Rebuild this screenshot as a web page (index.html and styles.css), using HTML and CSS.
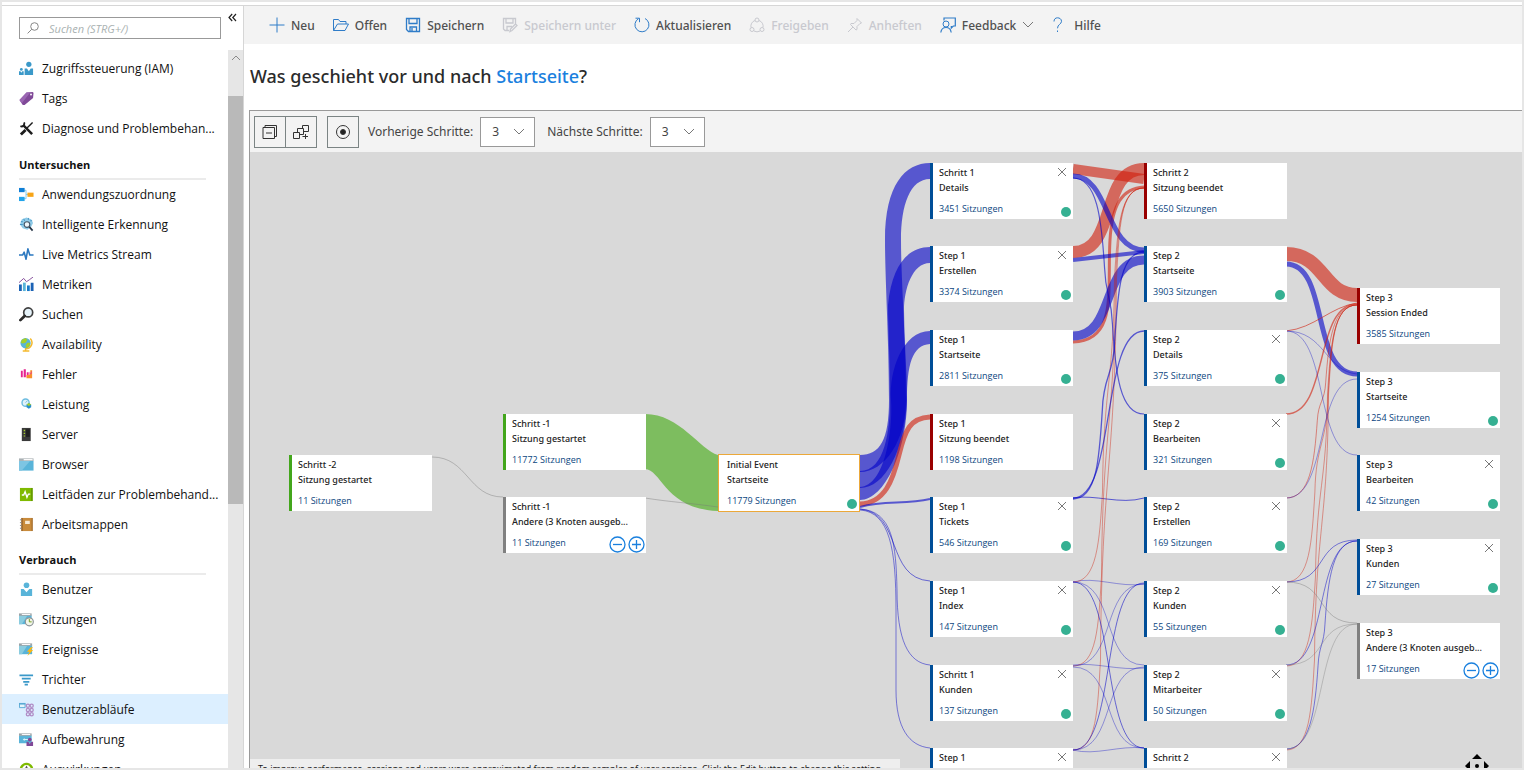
FILE: index.html
```html
<!DOCTYPE html>
<html lang="de">
<head>
<meta charset="utf-8">
<title>Benutzerabläufe</title>
<link rel="stylesheet" href="styles.css">
</head>
<body>
<div class="shell">
  <aside class="sidebar">
    <div class="side-head">
      <label class="search">
        <svg width="12" height="12" viewBox="0 0 12 12" fill="none" stroke="#888"><circle cx="7.5" cy="4.5" r="3.8"/><path d="M4.800 7.200 0.600 11.400"/></svg>
        <input type="text" placeholder="Suchen (STRG+/)" aria-label="Suchen">
      </label>
      <button class="collapse" aria-label="Menü einklappen">
        <svg width="9" height="9" viewBox="0 0 9 9" fill="none" stroke="#222" stroke-width="1.200"><path d="M4.200 1 1 4.500l3.200 3.500M8 1 4.800 4.500 8 8"/></svg>
      </button>
    </div>
    <div class="side-body">
      <nav class="menu">
        <ul>
          <li><a href="#"><svg viewBox="0 0 16 16"><g fill="#3b99c9"><circle cx="10.500" cy="3.500" r="2.800"/><path d="M6 15V8h2.500l2 3 2-3H15v7z"/><circle cx="2.500" cy="9" r="1.500"/><path d="M0 15v-4h1.500l1 1.500 1-1.500H5v4z"/></g></svg>Zugriffssteuerung (IAM)</a></li>
          <li><a href="#"><svg viewBox="0 0 16 16"><path fill="#804998" d="M.5 9.500 8 1.500 14.500 1l1 .8-.5 5.700-9 7.500-2 0z"/><path fill="#9a66b2" d="M.5 9.500 8 1.500h4L3 13z"/><circle cx="12.800" cy="3.700" r="1" fill="#fff"/></svg>Tags</a></li>
          <li><a href="#"><svg viewBox="0 0 16 16" fill="none" stroke="#1c1c1c"><path stroke-width="2.600" d="m4.500 4.500 9.500 9.500"/><path stroke-width="2" d="M5.500 1.500c1 3-1.500 5-4 4"/><path stroke-width="1.500" d="M14.500 1.500 8 8"/><path stroke-width="3" d="M7 9.500 2 14.500"/></svg>Diagnose und Problembehan...</a></li>
        </ul>
        <h2>Untersuchen</h2>
        <ul>
          <li><a href="#"><svg viewBox="0 0 16 16"><path d="M5 3.500h2.500v9H5M7.500 8H10" fill="none" stroke="#7cc6ea"/><path fill="#0f7fd6" d="M0 1h6v4.500H0z"/><path fill="#22a4ea" d="M0 10.500h6V15H0z"/><path fill="#f7a416" d="M9 6h6.500v4.500H9z"/></svg>Anwendungszuordnung</a></li>
          <li><a href="#"><svg viewBox="0 0 16 16"><path fill="#8fcbe8" d="M3 2.500 8 .5l5 2 2 4-2 4-4 3-5-1.500L1 8z"/><path d="M2 5h2M1 8h3M5 2l1 2M10 1v2M12 4h2" stroke="#3f8fc0" fill="none"/><circle cx="8.500" cy="8" r="3" fill="#eef7fb" stroke="#456" stroke-width="1.200"/><path d="m11 10.500 3.500 4" stroke="#234" stroke-width="1.800"/></svg>Intelligente Erkennung</a></li>
          <li><a href="#"><svg viewBox="0 0 16 16" fill="none" stroke="#2b78c0" stroke-width="1.700" stroke-linejoin="round"><path d="M0 8.500h4l1.500-3 2 7.500L9.500 2l2 6.500H15.500"/></svg>Live Metrics Stream</a></li>
          <li><a href="#"><svg viewBox="0 0 16 16"><path fill="#1b62b5" d="M0 8h3v7H0zM12.500 6h3v9h-3z"/><path fill="#59b4d9" d="M4.200 6H7.200V15H4.200z"/><path fill="#1679c9" d="M8.500 9h3V15h-3z"/><path d="M0 6 5 1.500l3 3.500 3-2 4-3" fill="none" stroke="#804998"/></svg>Metriken</a></li>
          <li><a href="#"><svg viewBox="0 0 16 16"><circle cx="9.800" cy="5.800" r="4.800" fill="#e6f3fa" stroke="#3e3e3e" stroke-width="1.800"/><path d="m6 9.500-4.500 4.500" stroke="#2b2b2b" stroke-width="3" stroke-linecap="round"/></svg>Suchen</a></li>
          <li><a href="#"><svg viewBox="0 0 16 16"><path d="M12 1.500a6.500 6.500 0 0 1-5 11v2M4 15h7" stroke="#f5b92d" stroke-width="1.600" fill="none"/><circle cx="7" cy="6.500" r="5.500" fill="#59b4d9"/><path fill="#a6cf2a" d="M3 3 7 1l2 2-2 3-3 1-2-1zM9 6l3 0-1 4-3 2-1-3z"/></svg>Availability</a></li>
          <li><a href="#"><svg viewBox="0 0 16 16"><path fill="#e6238f" d="M2 4h2v7H2zM5 2.500h2.300V11H5zM8.300 5.500h2V11h-2z"/><path fill="#f7902c" d="M8 8.500h2l2-1V3.500h2V12H8z"/><path fill="#ec3f88" d="M10.500 4.500 12 7l1.500-3v3l-2 1z"/></svg>Fehler</a></li>
          <li><a href="#"><svg viewBox="0 0 16 16"><circle cx="7" cy="6" r="3.800" fill="#e0f2fa" stroke="#6dbce0" stroke-width="1.500"/><path d="M7 6 9 4" stroke="#6dbce0"/><path fill="#2b8fcb" d="m8 8 2.500-1.500L13 8v3l-2.500 1.500L8 11z"/><path fill="#a6cf2a" d="m10.500 6.500 2.500 1.500-2.500 1.500L8 8z"/></svg>Leistung</a></li>
          <li><a href="#"><svg viewBox="0 0 16 16"><path fill="#3a3a3a" d="M3 1h9.500v14H3z"/><path fill="#1f1f1f" d="M7.500 2.500h4v8h-4z"/><path fill="#a6cf2a" d="M5 3h1.500v1.500H5zM5 6h1.500v1.500H5zM5 9h1.500v1H5z"/></svg>Server</a></li>
          <li><a href="#"><svg viewBox="0 0 16 16"><path fill="#59b4d9" d="M0 4h15.500v10.500H0z"/><path fill="#7dc5e3" d="M0 4h12L3 14.500H0z"/><path fill="#a9b0b4" d="M0 1.500h15.500v2.700H0z"/><path fill="#fff" d="M5 2.200h9.500v1.300H5z"/></svg>Browser</a></li>
          <li><a href="#"><svg viewBox="0 0 16 16"><path fill="#7fba00" d="M1 1h13.500v14H1z"/><path fill="#619500" d="M13 1h1.500v14H13z"/><path d="M3 8.500h2L6.500 5l2 6L10 7.500h2" fill="none" stroke="#fff" stroke-width="1.400"/></svg>Leitfäden zur Problembehand...</a></li>
          <li><a href="#"><svg viewBox="0 0 16 16"><path fill="#c98b3b" d="M2.500 1h12v14h-12z"/><path fill="#99652b" d="M2.500 1H4v14H2.500zM13.500 1h1v14h-1z"/><path fill="#f7ead5" d="M6.500 4h5v3.500h-5z"/><path d="M1 3h2M1 6h2M1 9h2M1 12h2" stroke="#888"/></svg>Arbeitsmappen</a></li>
        </ul>
        <h2 class="second">Verbrauch</h2>
        <ul>
          <li><a href="#"><svg viewBox="0 0 16 16"><g fill="#59b4d9"><circle cx="8" cy="3.500" r="3"/><path d="M2 15V7.500h3L8 11l3-3.500h3V15z"/></g></svg>Benutzer</a></li>
          <li><a href="#"><svg viewBox="0 0 16 16"><path fill="#59b4d9" d="M0 3.500h13.500V13H0z"/><path fill="#8accdf" d="M0 3.500h9L3 13H0z"/><path fill="#9ba2a6" d="M0 1.500h13.500v2.500H0z"/><path fill="#fff" d="M3 2.200h9v1H3z"/><circle cx="11" cy="10.500" r="4.300" fill="#f2f6e8" stroke="#8b9297" stroke-width="1.200"/><path d="M11 7.500v3h2.500" fill="none" stroke="#6f9a1b"/></svg>Sitzungen</a></li>
          <li><a href="#"><svg viewBox="0 0 16 16"><path fill="#59b4d9" d="M0 3.500h14V13H0z"/><path fill="#8accdf" d="M0 3.500h9L3 13H0z"/><path fill="#9ba2a6" d="M0 1.500h14v2.500H0z"/><path fill="#fff" d="M3 2.200h9v1H3z"/><path fill="#fbb713" d="m12.500 5.500-4 5h2.500l-2 4.500 6-6.500h-2.500l2.500-3z"/></svg>Ereignisse</a></li>
          <li><a href="#"><svg viewBox="0 0 16 16" fill="none" stroke="#3b99c9" stroke-width="1.800"><path d="M.5 3.500h14.500M3 7h9.500M4.500 10.500h6.500M6 13.500h3.500"/></svg>Trichter</a></li>
          <li class="active"><a href="#"><svg viewBox="0 0 16 16"><path fill="#e4f4fb" stroke="#59a9d4" d="M.5 2h6v4h-6z"/><path fill="#59a9d4" d="M0 1h7v1.500H0z"/><g fill="none" stroke="#b08cc6" stroke-width="1.400"><circle cx="9.500" cy="4" r="1.700"/><circle cx="13.500" cy="4" r="1.700"/><circle cx="9.500" cy="8.500" r="1.700"/><circle cx="13.500" cy="8.500" r="1.700"/><circle cx="9.500" cy="13" r="1.700"/><circle cx="13.500" cy="13" r="1.700"/></g></svg>Benutzerabläufe</a></li>
          <li><a href="#"><svg viewBox="0 0 16 16"><path fill="#59b4d9" d="M0 3.500h13.500V12H0z"/><path fill="#9ba2a6" d="M0 1.500h13.500v2.500H0z"/><path fill="#fff" d="M3 2.200h9v1H3z"/><path fill="#d9f0f8" d="m4 8 2-1.500v1h4v1H6v1z"/><g fill="#804998"><circle cx="11.500" cy="8" r="2"/><path d="M8 15v-4.500h2l1.500 2 1.500-2h2V15z"/></g></svg>Aufbewahrung</a></li>
          <li><a href="#"><svg viewBox="0 0 16 16" fill="none"><circle cx="8" cy="8" r="6" stroke="#7fba00" stroke-width="2.600"/><path d="M8 5v5M6.500 8 8 5l1.500 3" stroke="#555" stroke-width="1.200"/></svg>Auswirkungen</a></li>
        </ul>
      </nav>
      <div class="scrollbar"><svg width="16" height="16" viewBox="0 0 16 16" fill="none" stroke="#8a8a8a"><path d="m4 10 4-4 4 4"/></svg><div class="thumb"></div></div>
    </div>
  </aside>

  <main class="main">
    <div class="commands">
      <button><svg viewBox="0 0 16 16"><path d="M8 .5v15M.5 8h15"/></svg>Neu</button>
      <button><svg viewBox="0 0 16 16"><path d="M.5 13.500V2.500h5l1.500 2h6v2.500M.5 13.500h11.500l3.500-6.500H4.500z"/></svg>Offen</button>
      <button><svg viewBox="0 0 16 16"><path d="M1.500 1.500h13v13H3.500l-2-2zM4 1.500v5h8v-5M5 14.500V10h6.500v4.500M7 11v3" stroke-width="1.300"/></svg>Speichern</button>
      <button disabled><svg viewBox="0 0 16 16"><path d="M7 13.500H3l-1.500-1.500V1.500h12v5M4 1.500v4.500h7V1.500M5 13.500V9.500h5M8 14.500l.5-2.500 5-5 1.500 1.500-5 5z" stroke-width="1.300"/></svg>Speichern unter</button>
      <button><svg viewBox="0 0 16 16"><path d="M11 1.500a7 7 0 1 1-6.500.2M1.500 1.200h4v4"/></svg>Aktualisieren</button>
      <button disabled><svg viewBox="0 0 16 16"><circle cx="8" cy="3" r="2"/><circle cx="3" cy="12.500" r="2"/><circle cx="13" cy="12.500" r="2"/><path d="M6 3.500a6 6 0 0 0-4 7M10 3.500a6 6 0 0 1 4 7M5 14a6 6 0 0 0 6 0"/></svg>Freigeben</button>
      <button disabled><svg viewBox="0 0 16 16"><path d="m10 1.500 4.500 4.500-1.500.5-3 3v3l-1 .5L3.500 7.500l.5-1h3l3-3zM6 10l-5 5"/></svg>Anheften</button>
      <button><svg viewBox="0 0 16 16"><circle cx="6" cy="7" r="3"/><path d="M.8 15.500c.5-3.500 2.500-5 5.200-5s4.700 1.500 5.200 5M4 3.500V1h11.300v8h-2l-2 2V9" stroke-width="1.200"/></svg>Feedback<svg class="chev" viewBox="0 0 12 12"><path d="m1 3 5 5 5-5"/></svg></button>
      <button><svg viewBox="0 0 16 16"><path d="M2 4.500C2 2 3.500.8 5.500.8S9.500 2 9.500 4.300c0 3-4 3-4 7M5.500 13.500v1.500"/></svg>Hilfe</button>
    </div>
    <h1>Was geschieht vor und nach <a href="#">Startseite</a>?</h1>
    <section class="panel">
      <div class="tools">
        <div class="pair">
          <button aria-label="Alle reduzieren"><svg viewBox="0 0 16 16"><path d="M1 3.500h11.500v11H1zM3 3.500V1.500h11.500v11h-2M4 9h6"/></svg></button>
          <button aria-label="Alle erweitern"><svg viewBox="0 0 16 16"><path d="M.5 8.500h6v6h-6zM4.500 8.500v-4h6v6h-4M9.500 4.500v-3h6v6h-5M9.500 12.500h5.500M12.500 10v5"/></svg></button>
        </div>
        <button aria-label="Zentrieren"><svg viewBox="0 0 16 16"><circle cx="8" cy="8" r="6.500"/><circle cx="8" cy="8" r="2.500" fill="#222"/></svg></button>
        <label for="prev">Vorherige Schritte:</label>
        <span class="drop"><select id="prev"><option>3</option></select><svg class="chev" viewBox="0 0 12 12"><path d="m1 3 5 5 5-5"/></svg></span>
        <label for="next" class="next">Nächste Schritte:</label>
        <span class="drop"><select id="next"><option>3</option></select><svg class="chev" viewBox="0 0 12 12"><path d="m1 3 5 5 5-5"/></svg></span>
      </div>
      <div class="canvas" id="canvas">
        <svg id="flows" width="1272" height="616" viewBox="250 152 1272 616"></svg>
        <p class="notice">To improve performance, sessions and users were approximated from random samples of user sessions. Click the Edit button to change this setting.</p>
        <svg class="move" width="26" height="26" viewBox="0 0 26 26"><path d="m13 1 5 5H8zM13 25l5-5H8zM1 13l5-5v10zM25 13l-5-5v10z"/><circle cx="13" cy="13" r="2"/></svg>
      </div>
    </section>
  </main>
</div>
<script src="app.js"></script>
</body>
</html>
```
FILE: styles.css
```css
* { box-sizing: border-box; }
body { margin: 0; font-family: "Noto Sans", "Open Sans", sans-serif; font-size: 12px; color: #1c1c1c; background: #fff; }
button, input, select { font: inherit; color: inherit; }
button { cursor: pointer; }
.shell { display: flex; height: 100vh; border: 2px solid #e6e6e6; padding-top: 4px; position: relative; }
.shell::before { content: ""; position: absolute; left: 0; right: 0; top: 3px; height: 1px; background: #d6d6d6; }

.sidebar { width: 242px; flex: none; display: flex; flex-direction: column; border-right: 1px solid #d6d6d6; font-family: "Open Sans", "Noto Sans", sans-serif; }
.side-head { display: flex; align-items: flex-start; gap: 7px; padding: 11px 0 11px 17px; }
.search { display: flex; align-items: center; gap: 10px; width: 202px; height: 22px; border: 1px solid #999; padding-left: 7px; }
.search svg { flex: none; }
.search input { border: 0; outline: 0; width: 150px; padding: 0; background: none; font-size: 11px; font-style: italic; }
.search input::placeholder { color: #a9b1b1; opacity: 1; }
.collapse { border: 0; background: none; padding: 0; height: 9px; line-height: 0; margin-top: -4px; }
.side-body { flex: 1; min-height: 0; display: flex; }
.menu { flex: 1; overflow: hidden; padding-top: 3px; }
.menu ul { list-style: none; margin: 0; padding: 0; }
.menu a { display: flex; align-items: center; gap: 8px; height: 30px; padding-left: 17px; color: #111; text-decoration: none; white-space: nowrap; }
.menu a svg { width: 15px; height: 15px; flex: none; }
.menu .active { background: #dcefff; }
.menu h2 { margin: 9px 22px -1px 17px; padding-top: 3px; height: 28px; line-height: 20px; font-size: 11px; font-weight: 700; color: #111; border-bottom: 2px solid #ebebeb; }
.menu h2.second { margin-top: 8px; }
.scrollbar { width: 15px; background: #e6e6e6; flex: none; }
.scrollbar svg { display: block; }
.thumb { margin-top: 30px; height: 66%; max-height: 408px; background: #b9b9b9; }
.main { flex: 1; min-width: 0; display: flex; flex-direction: column; }

.commands { display: flex; align-items: center; gap: 18px; height: 38px; flex: none; background: #f3f3f3; padding-left: 25px; }
.commands button { display: flex; align-items: center; gap: 6px; border: 0; background: none; padding: 0; font-size: 12px; font-weight: 500; color: #505050; white-space: nowrap; }
.commands svg { width: 16px; height: 16px; fill: none; stroke: #2f7cc8; }
.commands button:disabled { color: #c8c9cf; }
.commands button:disabled svg { stroke: #c8c9cf; }
.commands svg.chev { width: 12px; height: 12px; stroke: #777; }
h1 { margin: 0; padding: 18px 0 0 6px; height: 66px; line-height: 28px; font-size: 18px; font-weight: 500; color: #2b2b2b; flex: none; }
h1 a { color: #1a80de; text-decoration: none; }

.panel { flex: 1; min-height: 0; display: flex; flex-direction: column; margin-left: 5px; border-top: 1px solid #999; border-left: 1px solid #999; }
.tools { display: flex; align-items: center; height: 41px; flex: none; background: #f3f3f3; padding-left: 4px; color: #444; }
.tools button { display: grid; place-items: center; width: 32px; height: 32px; padding: 0; background: #f3f3f3; border: 1px solid #7b8484; }
.tools button svg { width: 16px; height: 16px; fill: none; stroke: #333; }
.pair { display: flex; margin-right: 10px; }
.pair button + button { margin-left: -1px; }
.tools label { margin: 0 7px 0 9px; }
.tools label.next { margin-left: 12px; }
.drop { position: relative; width: 55px; height: 30px; }
.drop select { appearance: none; width: 100%; height: 100%; border: 1px solid #999; border-radius: 0; background: #fff; padding: 0 0 0 11px; }
.drop svg { position: absolute; right: 10px; top: 9px; width: 12px; height: 12px; fill: none; stroke: #777; pointer-events: none; }

.canvas { position: relative; flex: 1; min-height: 0; overflow: hidden; background: #d9d9d9; }
#flows { position: absolute; left: 0; top: 0; }
.node { position: absolute; width: 143px; height: 56px; background: #fff; border-left: 3px solid #004e98; padding: 2px 0 0 6px; font-size: 9px; line-height: 15px; font-weight: 500; color: #222; white-space: nowrap; }
.node p { margin: 0; }
.node .count { margin-top: 6px; font-family: "Open Sans", "Noto Sans", sans-serif; font-weight: 400; color: #0b4680; }
.node.green { border-left-color: #43a61c; }
.node.red { border-left-color: #900; }
.node.grey { border-left-color: #808080; }
.node.initial { border: 1px solid #eba83a; width: 142px; height: 58px; padding-left: 8px; }
.close { position: absolute; top: 4px; right: 6px; border: 0; background: none; padding: 0; line-height: 0; }
.close svg { fill: none; stroke: #777; }
.dot { position: absolute; right: 2px; bottom: 2px; width: 10px; height: 10px; border-radius: 50%; background: #35b092; }
.more { position: absolute; right: 1px; bottom: 0; display: flex; gap: 2px; }
.more button { border: 0; background: none; padding: 0; line-height: 0; }
.more svg { fill: none; stroke: #1a80de; stroke-width: 1.300; }
.notice { position: absolute; left: 0; bottom: 0; width: 650px; height: 9px; overflow: hidden; margin: 0; padding: 4px 0 0 8px; background: #eee; font-size: 9px; line-height: 12px; white-space: nowrap; }
.move { position: absolute; right: 32px; bottom: -11px; fill: #000; }
```
FILE: app.js
```js
const S = " Sitzungen";
const nodes = [
  [289, 455, "green", "Schritt -2", "Sitzung gestartet", 11, ""],
  [503, 414, "green", "Schritt -1", "Sitzung gestartet", 11772, ""],
  [503, 497, "grey", "Schritt -1", "Andere (3 Knoten ausgeb...", 11, "m"],
  [718, 454, "initial", "Initial Event", "Startseite", 11779, "d"],
  [930, 163, "", "Schritt 1", "Details", 3451, "xd"],
  [930, 246, "", "Step 1", "Erstellen", 3374, "xd"],
  [930, 330, "", "Step 1", "Startseite", 2811, "d"],
  [930, 414, "red", "Step 1", "Sitzung beendet", 1198, ""],
  [930, 497, "", "Step 1", "Tickets", 546, "xd"],
  [930, 581, "", "Step 1", "Index", 147, "xd"],
  [930, 665, "", "Schritt 1", "Kunden", 137, "xd"],
  [930, 748, "", "Step 1", "", "", "x"],
  [1144, 163, "red", "Schritt 2", "Sitzung beendet", 5650, ""],
  [1144, 246, "", "Step 2", "Startseite", 3903, "d"],
  [1144, 330, "", "Step 2", "Details", 375, "xd"],
  [1144, 414, "", "Step 2", "Bearbeiten", 321, "xd"],
  [1144, 497, "", "Step 2", "Erstellen", 169, "xd"],
  [1144, 581, "", "Step 2", "Kunden", 55, "xd"],
  [1144, 665, "", "Step 2", "Mitarbeiter", 50, "xd"],
  [1144, 748, "", "Schritt 2", "", "", "x"],
  [1357, 288, "red", "Step 3", "Session Ended", 3585, ""],
  [1357, 372, "", "Step 3", "Startseite", 1254, "d"],
  [1357, 455, "", "Step 3", "Bearbeiten", 42, "xd"],
  [1357, 539, "", "Step 3", "Kunden", 27, "xd"],
  [1357, 623, "grey", "Step 3", "Andere (3 Knoten ausgeb...", 17, "m"]
];
const close = '<button class="close" aria-label="Schließen"><svg width="10" height="10" viewBox="0 0 10 10"><path d="m1 1 8 8M9 1 1 9"/></svg></button>';
const more = '<span class="more"><button aria-label="Weniger"><svg width="17" height="17" viewBox="0 0 17 17"><circle cx="8.500" cy="8.500" r="7.500"/><path d="M4 8.500h9"/></svg></button><button aria-label="Mehr"><svg width="17" height="17" viewBox="0 0 17 17"><circle cx="8.500" cy="8.500" r="7.500"/><path d="M4 8.500h9M8.500 4v9"/></svg></button></span>';
const origin = { x: 250, y: 152 };
document.getElementById("flows").insertAdjacentHTML("afterend", nodes.map(([x, y, kind, step, name, n, f]) =>
  `<article class="node ${kind}" style="left:${x - origin.x}px;top:${y - origin.y}px"><p>${step}</p><p>${name}</p>` +
  (n ? `<p class="count">${n + S}</p>` : "") +
  (f.includes("x") ? close : "") + (f.includes("d") ? '<i class="dot"></i>' : "") + (f.includes("m") ? more : "") +
  "</article>").join(""));

const B = "#0000c8", R = "#d01c0a", G = "#777";
const areas = [
  ["#3faa0e", "M645 414C680 414 700 450 718 455V511C665 509 662 470 645 469z"],
  [B, "M860 455C880 455 889 440 889 400C889 340 885 280 885 240C885 185 905 163 930 163V179C910 179 901 205 901 240C901 280 906 340 906 400C906 440 885 472 860 472z"],
  [B, "M860 471C885 471 890 430 890 400C890 360 888 330 888 305C892 265 908 247 930 247V263C912 263 904 290 904 310C904 340 907 370 907 400C905 450 885 488 860 488z"],
  [B, "M860 487C885 486 893 430 891 400C889 370 903 331 930 331V344C912 345 907 365 907 400C907 450 885 500 860 500z"]
];
const bands = [
  [R, 5, "M860 504C885 503 893 480 899 455C905 430 910 418 930 417"],
  [B, 2, "M860 507C885 500 905 505 930 499"],
  [R, 10, "M1073 169L1144 179"],
  [R, 12, "M1073 252C1118 252 1099 169 1144 169"],
  [R, 3, "M1073 342C1118 341 1107 290 1110 240C1112 205 1122 188 1144 187"],
  [B, 5, "M1073 176C1110 176 1105 250 1144 250"],
  [B, 4, "M1073 260L1144 252"],
  [B, 9, "M1073 336C1116 336 1101 260 1144 260"],
  [R, 14, "M1286 254C1325 254 1322 295 1357 295"],
  [B, 5, "M1286 264C1330 264 1310 374 1357 374"],
  [B, 1, "M1073 498C1095 494 1120 505 1144 498"],
  [B, .6, "M1073 582C1095 576 1120 588 1144 584"],
  [B, .6, "M1073 665C1095 662 1120 671 1144 668"],
  [B, .6, "M1073 750C1095 756 1120 745 1144 748"],
  [G, .7, "M432 457C468 457 468 497 503 497"],
  [G, .7, "M645 498C670 502 690 503 718 507"],
  [B, .6, "M1286 331C1325 331 1325 371 1357 374"],
  [R, 1, "M1286 331C1315 328 1330 307 1357 303"],
  [B, .9, "M860 509C903 513 885 578 930 581"],
  [B, .8, "M860 509C893 511 896 545 897 590C897 640 908 663 930 665"],
  [B, .8, "M860 510C890 512 896 550 896 610V690C896 728 909 746 930 748"]
];
const threads = [
  [R, 1073, 582, 1144, 188, .7], [R, 1073, 666, 1144, 188, .7], [R, 1073, 750, 1144, 188, .7],
  [B, 1073, 178, 1144, 414, 1.2], [B, 1073, 498, 1144, 331, 1.3], [B, 1073, 499, 1144, 252, 1.3],
  [B, 1073, 582, 1144, 665, .6], [B, 1073, 582, 1144, 748, .9],
  [B, 1073, 666, 1144, 584, .6], [B, 1073, 667, 1144, 748, .6],
  [B, 1073, 750, 1144, 583, .9], [B, 1073, 750, 1144, 667, .6],
  [R, 1286, 414, 1357, 304, 1.4], [R, 1286, 498, 1357, 305, .8], [R, 1286, 582, 1357, 305, .7],
  [R, 1286, 666, 1357, 305, .7], [R, 1286, 750, 1357, 305, .7],
  [B, 1286, 331, 1357, 455, .6], [B, 1286, 498, 1357, 379, .6], [B, 1286, 582, 1357, 540, .8],
  [B, 1286, 665, 1357, 541, .8], [B, 1286, 749, 1357, 541, .8],
  [G, 1286, 582, 1357, 623, .7], [G, 1286, 665, 1357, 624, .6], [G, 1286, 749, 1357, 624, .6]
];
/* Short links are one S-curve; long ones bend at both ends around a steep run. */
function thread(x1, y1, x2, y2, k) {
  const dy = y2 - y1, m = (x1 + x2) / 2;
  if (Math.abs(dy) < 180) return `M${x1} ${y1}C${m + 8} ${y1} ${m - 8} ${y2} ${x2} ${y2}`;
  const d = Math.sign(dy) * Math.min(Math.abs(dy) * .4, 90);
  const lean = Math.min(6, Math.abs(dy) / 60) + (k % 3), a = m - lean, b = m + lean, c = (y1 + y2) / 2;
  return `M${x1} ${y1}C${x1 + 24} ${y1} ${a - 3} ${y1 + d * .45} ${a} ${y1 + d}` +
    `C${a + 1} ${c} ${b - 1} ${c} ${b} ${y2 - d}C${b + 3} ${y2 - d * .45} ${x2 - 24} ${y2} ${x2} ${y2}`;
}
document.getElementById("flows").innerHTML =
  '<g fill="none">' +
  areas.map(([c, d]) => `<path fill="${c}" fill-opacity=".6" d="${d}"/>`).join("") +
  bands.map(([c, w, d]) => `<path stroke="${c}" stroke-opacity=".6" stroke-width="${w}" d="${d}"/>`).join("") +
  threads.map(([c, a, b, x, y, w], k) => `<path stroke="${c}" stroke-opacity=".6" stroke-width="${w}" d="${thread(a, b, x, y, k)}"/>`).join("") +
  "</g>";
```
